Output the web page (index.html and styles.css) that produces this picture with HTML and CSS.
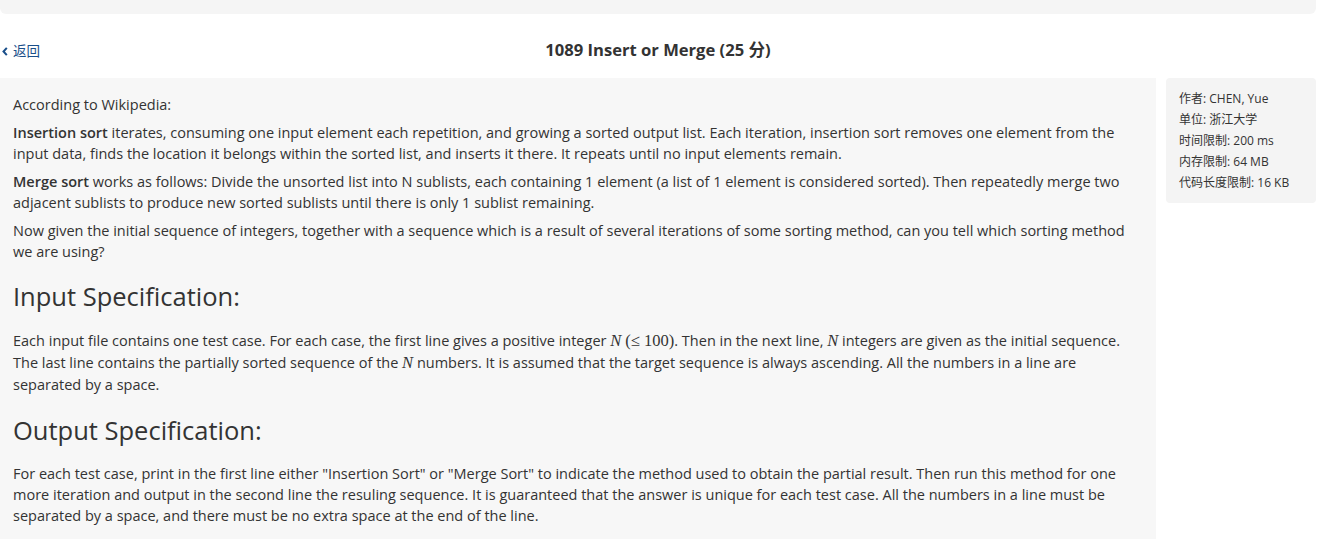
FILE: index.html
```html
<!DOCTYPE html>
<html lang="zh">
<head>
<meta charset="utf-8">
<title>1089 Insert or Merge</title>
<link rel="stylesheet" href="styles.css">
</head>
<body>
<div class="topstrip"></div>
<header class="header">
  <a class="back" href="#"><svg class="chev" width="6" height="9" viewBox="0 0 6 9"><path d="M4.8 0.8 L1.5 4.5 L4.8 8.2" fill="none" stroke="#1a4f8a" stroke-width="2"/></svg><span>返回</span></a>
  <h1 class="title">1089 Insert or Merge (25 分)</h1>
</header>
<div class="layout">
  <main class="problem">
    <p>According to Wikipedia:</p>
    <p><strong>Insertion sort</strong> iterates, consuming one input element each repetition, and growing a sorted output list. Each iteration, insertion sort removes one element from the input data, finds the location it belongs within the sorted list, and inserts it there. It repeats until no input elements remain.</p>
    <p><strong>Merge sort</strong> works as follows: Divide the unsorted list into N sublists, each containing 1 element (a list of 1 element is considered sorted). Then repeatedly merge two adjacent sublists to produce new sorted sublists until there is only 1 sublist remaining.</p>
    <p>Now given the initial sequence of integers, together with a sequence which is a result of several iterations of some sorting method, can you tell which sorting method we are using?</p>
    <h3 class="section">Input Specification:</h3>
    <p class="mathpara">Each input file contains one test case. For each case, the first line gives a positive integer <span class="math"><i>N</i> (<span class="le">≤</span> 100)</span>. Then in the next line, <span class="math"><i>N</i></span> integers are given as the initial sequence. The last line contains the partially sorted sequence of the <span class="math"><i>N</i></span> numbers. It is assumed that the target sequence is always ascending. All the numbers in a line are separated by a space.</p>
    <h3 class="section out">Output Specification:</h3>
    <p>For each test case, print in the first line either "Insertion Sort" or "Merge Sort" to indicate the method used to obtain the partial result. Then run this method for one more iteration and output in the second line the resuling sequence. It is guaranteed that the answer is unique for each test case. All the numbers in a line must be separated by a space, and there must be no extra space at the end of the line.</p>
  </main>
  <aside class="info">
    <div>作者: CHEN, Yue</div>
    <div>单位: 浙江大学</div>
    <div>时间限制: 200 ms</div>
    <div>内存限制: 64 MB</div>
    <div>代码长度限制: 16 KB</div>
  </aside>
</div>
</body>
</html>
```

FILE: styles.css
```css
* { box-sizing: border-box; }
html, body { margin: 0; padding: 0; background: #fff; }
body {
  font-family: "Open Sans", "Noto Sans CJK SC", sans-serif;
  color: #333;
  font-size: 14.5px;
  line-height: 21px;
  overflow: hidden;
}
.topstrip {
  width: 1316px;
  height: 14px;
  background: #f5f5f5;
  border-radius: 0 0 6px 6px;
}
.header {
  position: relative;
  width: 1316px;
  height: 64px;
  display: flex;
  align-items: center;
  justify-content: center;
}
.back {
  position: absolute;
  left: 2px;
  top: 27px;
  display: flex;
  align-items: center;
  gap: 5px;
  color: #1a4f8a;
  text-decoration: none;
  font-size: 13.5px;
}
.chev { display: block; }
.title {
  margin: 8px 0 0;
  font-size: 16.6px;
  font-weight: 700;
  color: #333;
  line-height: 24px;
}
.layout {
  display: flex;
  gap: 10px;
  align-items: flex-start;
}
.problem {
  width: 1156px;
  flex: none;
  background: #f7f7f7;
  padding: 16px 13px 20px;
  min-height: 470px;
}
.problem p { margin: 0 0 7px; }
.problem strong { font-weight: 600; }
.section {
  margin: 17px 0 16px;
  font-size: 25.5px;
  font-weight: 400;
  line-height: 35px;
}
.section.out { margin-bottom: 15px; }
.mathpara { line-height: 22px; }
.math { font-family: "Liberation Serif", serif; font-size: 16.5px; line-height: 1; }
.math i { font-style: italic; }
.info {
  width: 150px;
  flex: none;
  background: #f4f4f4;
  border-radius: 4px;
  padding: 10px 13px 10px;
  font-size: 12px;
  line-height: 21px;
}
```
